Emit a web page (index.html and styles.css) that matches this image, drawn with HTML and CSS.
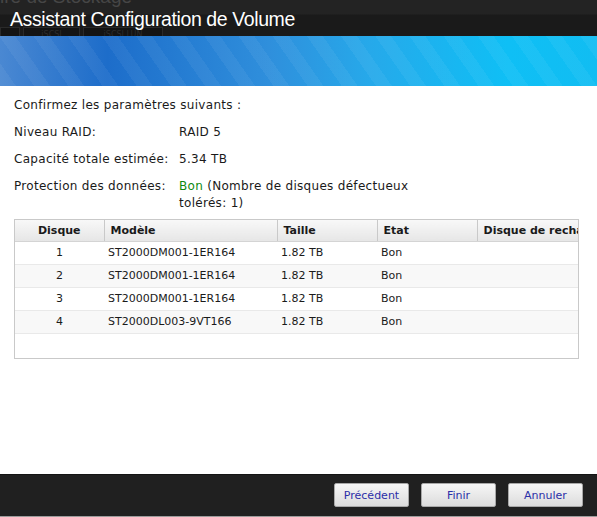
FILE: index.html
```html
<!DOCTYPE html>
<html lang="fr">
<head>
    <meta charset="UTF-8">
    <title>Assistant Configuration de Volume</title>
    <link rel="stylesheet" href="styles.css">
</head>
<body>
    <div class="dialog">
        <div class="titlebar">
            <div class="ghost-title">ire de Stockage</div>
            <div class="ghost-tabs">
                <span class="ghost-tab small"></span>
                <span class="ghost-tab">iSCSI</span>
                <span class="ghost-tab wide">iSCSI LUN</span>
            </div>
            <h1 class="title">Assistant Configuration de Volume</h1>
        </div>
        <div class="banner"></div>
        <div class="content">
            <p class="intro">Confirmez les paramètres suivants :</p>
            <div class="summary">
                <div class="label">Niveau RAID:</div>
                <div class="value">RAID 5</div>
                <div class="label">Capacité totale estimée:</div>
                <div class="value">5.34 TB</div>
                <div class="label">Protection des données:</div>
                <div class="value"><span class="good">Bon</span> (Nombre de disques défectueux tolérés: 1)</div>
            </div>
            <div class="grid">
                <table>
                    <thead>
                        <tr>
                            <th class="col-disk">Disque</th>
                            <th class="col-model">Modèle</th>
                            <th class="col-size">Taille</th>
                            <th class="col-state">Etat</th>
                            <th class="col-spare">Disque de rechange</th>
                        </tr>
                    </thead>
                    <tbody>
                        <tr>
                            <td class="col-disk">1</td>
                            <td>ST2000DM001-1ER164</td>
                            <td>1.82 TB</td>
                            <td>Bon</td>
                            <td></td>
                        </tr>
                        <tr>
                            <td class="col-disk">2</td>
                            <td>ST2000DM001-1ER164</td>
                            <td>1.82 TB</td>
                            <td>Bon</td>
                            <td></td>
                        </tr>
                        <tr>
                            <td class="col-disk">3</td>
                            <td>ST2000DM001-1ER164</td>
                            <td>1.82 TB</td>
                            <td>Bon</td>
                            <td></td>
                        </tr>
                        <tr>
                            <td class="col-disk">4</td>
                            <td>ST2000DL003-9VT166</td>
                            <td>1.82 TB</td>
                            <td>Bon</td>
                            <td></td>
                        </tr>
                    </tbody>
                </table>
            </div>
        </div>
        <div class="footer">
            <button class="btn">Précédent</button>
            <button class="btn">Finir</button>
            <button class="btn">Annuler</button>
        </div>
    </div>
</body>
</html>
```

FILE: styles.css
```css
* {
    box-sizing: border-box;
    margin: 0;
    padding: 0;
}
body {
    background-color: #ffffff;
    font-family: "DejaVu Sans", Verdana, sans-serif;
    font-size: 11px;
    color: #1a1a1a;
}
.dialog {
    width: 597px;
    height: 517px;
    display: flex;
    flex-direction: column;
    overflow: hidden;
}
.titlebar {
    position: relative;
    height: 36px;
    background: linear-gradient(#232323 0, #232323 14px, #1a1a1a 15px, #1a1a1a 100%);
    overflow: hidden;
}
.ghost-title {
    position: absolute;
    left: 0;
    top: -14px;
    font-family: "Liberation Sans", Arial, sans-serif;
    font-size: 19px;
    color: #464646;
}
.ghost-tabs {
    position: absolute;
    left: 0;
    top: 27px;
    display: flex;
    gap: 3px;
}
.ghost-tab {
    width: 57px;
    height: 12px;
    border: 1px solid #2a2a2a;
    background-color: #141414;
    color: #2c2c2c;
    font-size: 8px;
    line-height: 14px;
    text-align: center;
}
.ghost-tab.small {
    width: 20px;
}
.ghost-tab.wide {
    width: 80px;
}
.title {
    position: relative;
    padding: 7px 0 0 10px;
    font-family: "Liberation Sans", Arial, sans-serif;
    font-size: 19.5px;
    letter-spacing: -0.4px;
    font-weight: normal;
    color: #ffffff;
    line-height: 24px;
}
.banner {
    height: 50px;
    background:
        repeating-linear-gradient(55deg, rgba(255, 255, 255, 0.05) 0 13px, rgba(255, 255, 255, 0) 13px 28px),
        linear-gradient(90deg, #4a88d2 0%, #1d6dca 18%, #2f8fdc 45%, #26a9ea 62%, #0fbff5 85%, #11bdf2 100%);
}
.content {
    flex: 1;
    padding: 11px 0 0 14px;
    font-size: 12px;
    letter-spacing: 0.3px;
    line-height: 17px;
}
.intro {
    margin-bottom: 10px;
}
.summary {
    display: grid;
    grid-template-columns: 165px 240px;
    row-gap: 10px;
}
.good {
    color: #0f8a0f;
}
.grid {
    margin-top: 7px;
    width: 565px;
    height: 140px;
    border: 1px solid #c9c9c9;
    overflow: hidden;
    font-size: 11px;
    letter-spacing: 0;
}
table {
    border-collapse: collapse;
    table-layout: fixed;
    width: 620px;
}
th {
    height: 21px;
    padding: 0 6px;
    text-align: left;
    font-weight: bold;
    background: linear-gradient(#f8f8f8, #e6e6e6);
    border-right: 1px solid #c9c9c9;
    border-bottom: 1px solid #d4d4d4;
    white-space: nowrap;
    overflow: hidden;
}
td {
    height: 23px;
    padding: 0 4px;
    border-bottom: 1px solid #e9e9e9;
    white-space: nowrap;
}
tbody tr:nth-child(even) td {
    background-color: #f8f8f8;
}
.col-disk {
    width: 89px;
    text-align: center;
}
.col-model {
    width: 173px;
}
.col-size {
    width: 100px;
}
.col-state {
    width: 100px;
}
.col-spare {
    width: 158px;
}
.footer {
    height: 43px;
    background-color: #202020;
    border-top: 1px solid #141414;
    border-bottom: 1px solid #9c9c9c;
    display: flex;
    justify-content: flex-end;
    gap: 12px;
    padding: 8px 14px 0 0;
}
.btn {
    width: 75px;
    height: 24px;
    border: 1px solid #a8a8a8;
    border-radius: 2px;
    background: linear-gradient(#f6f6f6, #dcdcdc);
    color: #2b2fa8;
    font-family: "DejaVu Sans", Verdana, sans-serif;
    font-size: 11px;
}
```
